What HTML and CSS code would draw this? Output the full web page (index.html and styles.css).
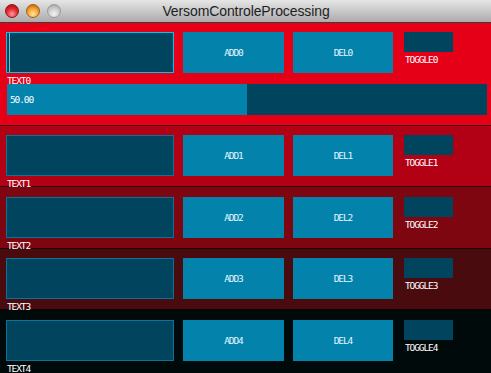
FILE: index.html
```html
<!DOCTYPE html>
<html lang="en">
<head>
    <meta charset="UTF-8">
    <title>VersomControleProcessing</title>
    <link rel="stylesheet" href="styles.css">
</head>
<body>

    <div class="window">

        <!-- Title Bar -->
        <div class="titlebar">
            <div class="lights">
                <span class="light close"></span>
                <span class="light min"></span>
                <span class="light zoom"></span>
            </div>
            <div class="title">VersomControleProcessing</div>
        </div>

        <!-- Row 0 -->
        <div class="row row0">
            <div class="controls">
                <div class="field-group">
                    <div class="field active"><span class="cursor"></span></div>
                    <div class="label">TEXT0</div>
                </div>
                <div class="btn">ADD0</div>
                <div class="btn">DEL0</div>
                <div class="toggle-group">
                    <div class="toggle"></div>
                    <div class="label">TOGGLE0</div>
                </div>
            </div>
            <div class="slider">
                <div class="slider-fill" style="width: 50%;"></div>
                <span class="slider-value">50.00</span>
            </div>
        </div>

        <!-- Row 1 -->
        <div class="row row1">
            <div class="controls">
                <div class="field-group">
                    <div class="field"></div>
                    <div class="label">TEXT1</div>
                </div>
                <div class="btn">ADD1</div>
                <div class="btn">DEL1</div>
                <div class="toggle-group">
                    <div class="toggle"></div>
                    <div class="label">TOGGLE1</div>
                </div>
            </div>
        </div>

        <!-- Row 2 -->
        <div class="row row2">
            <div class="controls">
                <div class="field-group">
                    <div class="field"></div>
                    <div class="label">TEXT2</div>
                </div>
                <div class="btn">ADD2</div>
                <div class="btn">DEL2</div>
                <div class="toggle-group">
                    <div class="toggle"></div>
                    <div class="label">TOGGLE2</div>
                </div>
            </div>
        </div>

        <!-- Row 3 -->
        <div class="row row3">
            <div class="controls">
                <div class="field-group">
                    <div class="field"></div>
                    <div class="label">TEXT3</div>
                </div>
                <div class="btn">ADD3</div>
                <div class="btn">DEL3</div>
                <div class="toggle-group">
                    <div class="toggle"></div>
                    <div class="label">TOGGLE3</div>
                </div>
            </div>
        </div>

        <!-- Row 4 -->
        <div class="row row4">
            <div class="controls">
                <div class="field-group">
                    <div class="field"></div>
                    <div class="label">TEXT4</div>
                </div>
                <div class="btn">ADD4</div>
                <div class="btn">DEL4</div>
                <div class="toggle-group">
                    <div class="toggle"></div>
                    <div class="label">TOGGLE4</div>
                </div>
            </div>
        </div>

    </div>

</body>
</html>
```

FILE: styles.css
```css
/* General Styles */
body {
    margin: 0;
    background: #000;
}

.window {
    width: 491px;
    height: 373px;
    display: flex;
    flex-direction: column;
    overflow: hidden;
}

/* Title Bar */
.titlebar {
    height: 23px;
    box-sizing: border-box;
    border-bottom: 1px solid #3c3c3c;
    background: linear-gradient(#e6e6e6, #ababab);
    display: flex;
    align-items: center;
}

.lights {
    display: flex;
    gap: 7px;
    padding-left: 5px;
    margin-top: -1px;
}

.light {
    width: 14px;
    height: 14px;
    border-radius: 50%;
    box-sizing: border-box;
}

.close {
    background: radial-gradient(circle at 50% 75%, #ff9d9d 0%, #e5252f 50%, #9c0a10 100%);
    border: 1px solid #8a1a1a;
}

.min {
    background: radial-gradient(circle at 50% 75%, #ffe7a0 0%, #f59a2a 55%, #a65a08 100%);
    border: 1px solid #a0601a;
}

.zoom {
    background: radial-gradient(circle at 50% 75%, #f2f2f2 0%, #c9c9c9 55%, #9a9a9a 100%);
    border: 1px solid #9a9a9a;
}

.title {
    flex: 1;
    text-align: center;
    margin-left: -60px;
    font-family: "Liberation Sans", Arial, sans-serif;
    font-size: 14px;
    letter-spacing: -0.1px;
    color: #1e1e1e;
    margin-top: -1px;
}

/* Rows */
.row {
    box-sizing: border-box;
    padding: 9px 0 0 6px;
    border-bottom: 1px solid rgba(0, 0, 0, 0.75);
}

.row0 { height: 103px; background: #e50018; }
.row1 { height: 61px; background: #b20014; }
.row2 { height: 62px; background: #7e0611; padding-top: 10px; }
.row3 { height: 61px; background: #4a0b0f; }
.row4 { flex: 1; background: #010a0b; border-bottom: none; padding-top: 10px; }

.controls {
    display: flex;
    align-items: flex-start;
    gap: 9px;
}

/* Pixel font labels */
.label, .btn, .slider-value {
    font-family: "DejaVu Sans Mono", monospace;
    font-size: 9.5px;
    letter-spacing: -1.1px;
    color: #fff;
}

.label {
    line-height: 7px;
    margin-top: 4px;
    margin-left: 1px;
}

/* Text field */
.field {
    width: 168px;
    height: 41px;
    box-sizing: border-box;
    background: #00455d;
    border: 1px solid #0a7399;
    display: flex;
}

.field.active {
    border-color: #00c4ee;
}

.cursor {
    width: 1px;
    margin-left: 2px;
    background: #7fb7c8;
}

/* Buttons */
.btn {
    width: 101px;
    height: 41px;
    background: #0382ab;
    color: #e4f6ff;
    display: flex;
    align-items: center;
    justify-content: center;
}

.btn + .btn {
    width: 100px;
}

/* Toggle */
.toggle-group {
    margin-left: 2px;
}

.toggle {
    width: 49px;
    height: 20px;
    background: #00455d;
}

/* Slider */
.slider {
    width: 480px;
    height: 31px;
    margin: 0 0 0 1px;
    background: #00455d;
    display: flex;
    align-items: center;
    position: relative;
}

.slider-fill {
    height: 100%;
    background: #0382ab;
}

.slider-value {
    position: absolute;
    left: 3px;
}
```
